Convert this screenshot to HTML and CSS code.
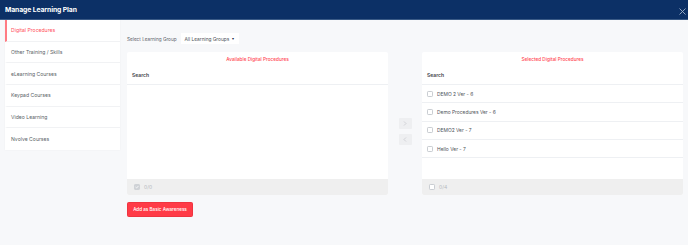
FILE: index.html
```html
<!DOCTYPE html>
<html>
<head>
<meta charset="utf-8">
<link rel="stylesheet" href="styles.css">
</head>
<body>
<header class="topbar">
  <span class="topbar-title">Manage Learning Plan</span>
  <svg class="close" width="7" height="7" viewBox="0 0 7 7"><path d="M0.5 0.5L6.5 6.5M6.5 0.5L0.5 6.5" stroke="#9fb0c8" stroke-width="0.9" fill="none"/></svg>
</header>
<div class="layout">
  <nav class="sidebar">
    <div class="nav-item active">Digital Procedures</div>
    <div class="nav-item">Other Training / Skills</div>
    <div class="nav-item">eLearning Courses</div>
    <div class="nav-item">Keypad Courses</div>
    <div class="nav-item">Video Learning</div>
    <div class="nav-item">Nvolve Courses</div>
  </nav>
  <main class="main">
    <div class="select-row">
      <span class="select-label">Select Learning Group</span>
      <div class="dropdown">All Learning Groups <span class="caret">&#9662;</span></div>
    </div>
    <div class="transfer">
      <section class="panel">
        <div class="panel-title">Available Digital Procedures</div>
        <div class="panel-search">Search</div>
        <div class="panel-body"></div>
        <div class="panel-footer">
          <span class="cb checked"><svg width="4" height="4" viewBox="0 0 4 4"><path d="M0.5 2L1.6 3L3.5 0.9" stroke="#fff" stroke-width="0.8" fill="none"/></svg></span>
          <span>0/0</span>
        </div>
      </section>
      <div class="arrows">
        <div class="arrow-btn"><svg width="4" height="5" viewBox="0 0 4 5"><path d="M1 0.5L3 2.5L1 4.5" stroke="#c4c7cc" stroke-width="0.7" fill="none"/></svg></div>
        <div class="arrow-btn"><svg width="4" height="5" viewBox="0 0 4 5"><path d="M3 0.5L1 2.5L3 4.5" stroke="#c4c7cc" stroke-width="0.7" fill="none"/></svg></div>
      </div>
      <section class="panel">
        <div class="panel-title">Selected Digital Procedures</div>
        <div class="panel-search">Search</div>
        <div class="panel-body">
          <div class="row"><span class="cb"></span>DEMO 2 Ver - 6</div>
          <div class="row"><span class="cb"></span>Demo Procedures Ver - 6</div>
          <div class="row"><span class="cb"></span>DEMO2 Ver - 7</div>
          <div class="row"><span class="cb"></span>Hello Ver - 7</div>
        </div>
        <div class="panel-footer">
          <span class="cb"></span>
          <span>0/4</span>
        </div>
      </section>
    </div>
    <button class="btn-add">Add as Basic Awareness</button>
  </main>
</div>
</body>
</html>
```
FILE: styles.css
```css
* { box-sizing: border-box; }
html, body { margin: 0; padding: 0; }
body {
  background: #f7f8fa;
  font-family: "Inter", "Open Sans", sans-serif;
  color: #4a4f57;
  width: 688px;
  height: 245px;
  overflow: hidden;
}
.topbar {
  height: 20px;
  background: #0c3066;
  border-bottom: 1px solid #3a5a86;
  display: flex;
  align-items: center;
  justify-content: space-between;
  padding: 0 2px 0 5px;
}
.topbar-title {
  color: #fff;
  font-weight: 700;
  font-size: 6.8px;
  letter-spacing: -0.1px;
}
.close { margin-top: 3px; }
.layout {
  display: flex;
  gap: 7px;
  padding: 0 5px 0 5px;
}
.sidebar {
  width: 115px;
  background: #fff;
  align-self: flex-start;
  box-shadow: 0 0 2px rgba(0,0,0,0.04);
}
.nav-item {
  height: 21.67px;
  display: flex;
  align-items: center;
  padding-left: 4px;
  font-size: 5.1px;
  color: #5a5f67;
  border-bottom: 1px solid #f1f2f4;
  border-left: 2px solid transparent;
}
.nav-item:last-child { border-bottom: none; }
.nav-item.active {
  color: #ff4f5a;
  border-left-color: #ff7b83;
}
.main {
  flex: 1;
  display: flex;
  flex-direction: column;
}
.select-row {
  display: flex;
  align-items: center;
  gap: 4px;
  margin-top: 13px;
  height: 11px;
  margin-bottom: 8px;
}
.select-label { font-size: 4.7px; color: #5c6169; }
.dropdown {
  background: #fff;
  height: 11px;
  width: 58px;
  display: flex;
  align-items: center;
  padding-left: 4px;
  gap: 3px;
  font-size: 4.8px;
  color: #4a4f57;
}
.caret { font-size: 4px; color: #1c2a48; }
.transfer {
  display: grid;
  grid-template-columns: 1fr 34px 1fr;
}
.panel {
  background: #fff;
  border-radius: 2px;
  display: flex;
  flex-direction: column;
  overflow: hidden;
}
.panel-title {
  height: 14px;
  display: flex;
  align-items: center;
  justify-content: center;
  color: #ff4652;
  font-size: 4.7px;
  font-weight: 500;
}
.panel-search {
  height: 19px;
  display: flex;
  align-items: center;
  padding-left: 5px;
  font-size: 5px;
  font-weight: 600;
  color: #3d4148;
  border-bottom: 1px solid #eef0f3;
}
.panel-body {
  height: 94px;
}
.row {
  height: 18.3px;
  display: flex;
  align-items: center;
  gap: 4px;
  padding-left: 5px;
  font-size: 4.9px;
  color: #4d5259;
  border-bottom: 1px solid #eef0f3;
}
.cb {
  width: 6px;
  height: 6px;
  border: 0.7px solid #c9cdd2;
  border-radius: 1.2px;
  background: #fff;
  display: inline-flex;
  align-items: center;
  justify-content: center;
}
.cb.checked {
  background: #cfd2d6;
  border-color: #cfd2d6;
}
.panel-footer {
  height: 16px;
  background: #efefef;
  display: flex;
  align-items: center;
  gap: 4px;
  padding-left: 7px;
  font-size: 5px;
  color: #b4b8bd;
}
.arrows {
  display: flex;
  flex-direction: column;
  align-items: center;
  padding-top: 66px;
  gap: 5px;
}
.arrow-btn {
  width: 13px;
  height: 11px;
  background: #eeeff1;
  border-radius: 1px;
  display: flex;
  align-items: center;
  justify-content: center;
}
.btn-add {
  margin-top: 7px;
  align-self: flex-start;
  width: 66px;
  height: 15px;
  background: #ff3b47;
  border: 1px solid #ef3440;
  border-radius: 1.5px;
  color: #fff;
  font-family: "Inter", sans-serif;
  font-size: 4.6px;
  font-weight: 500;
  padding: 0;
}
```
